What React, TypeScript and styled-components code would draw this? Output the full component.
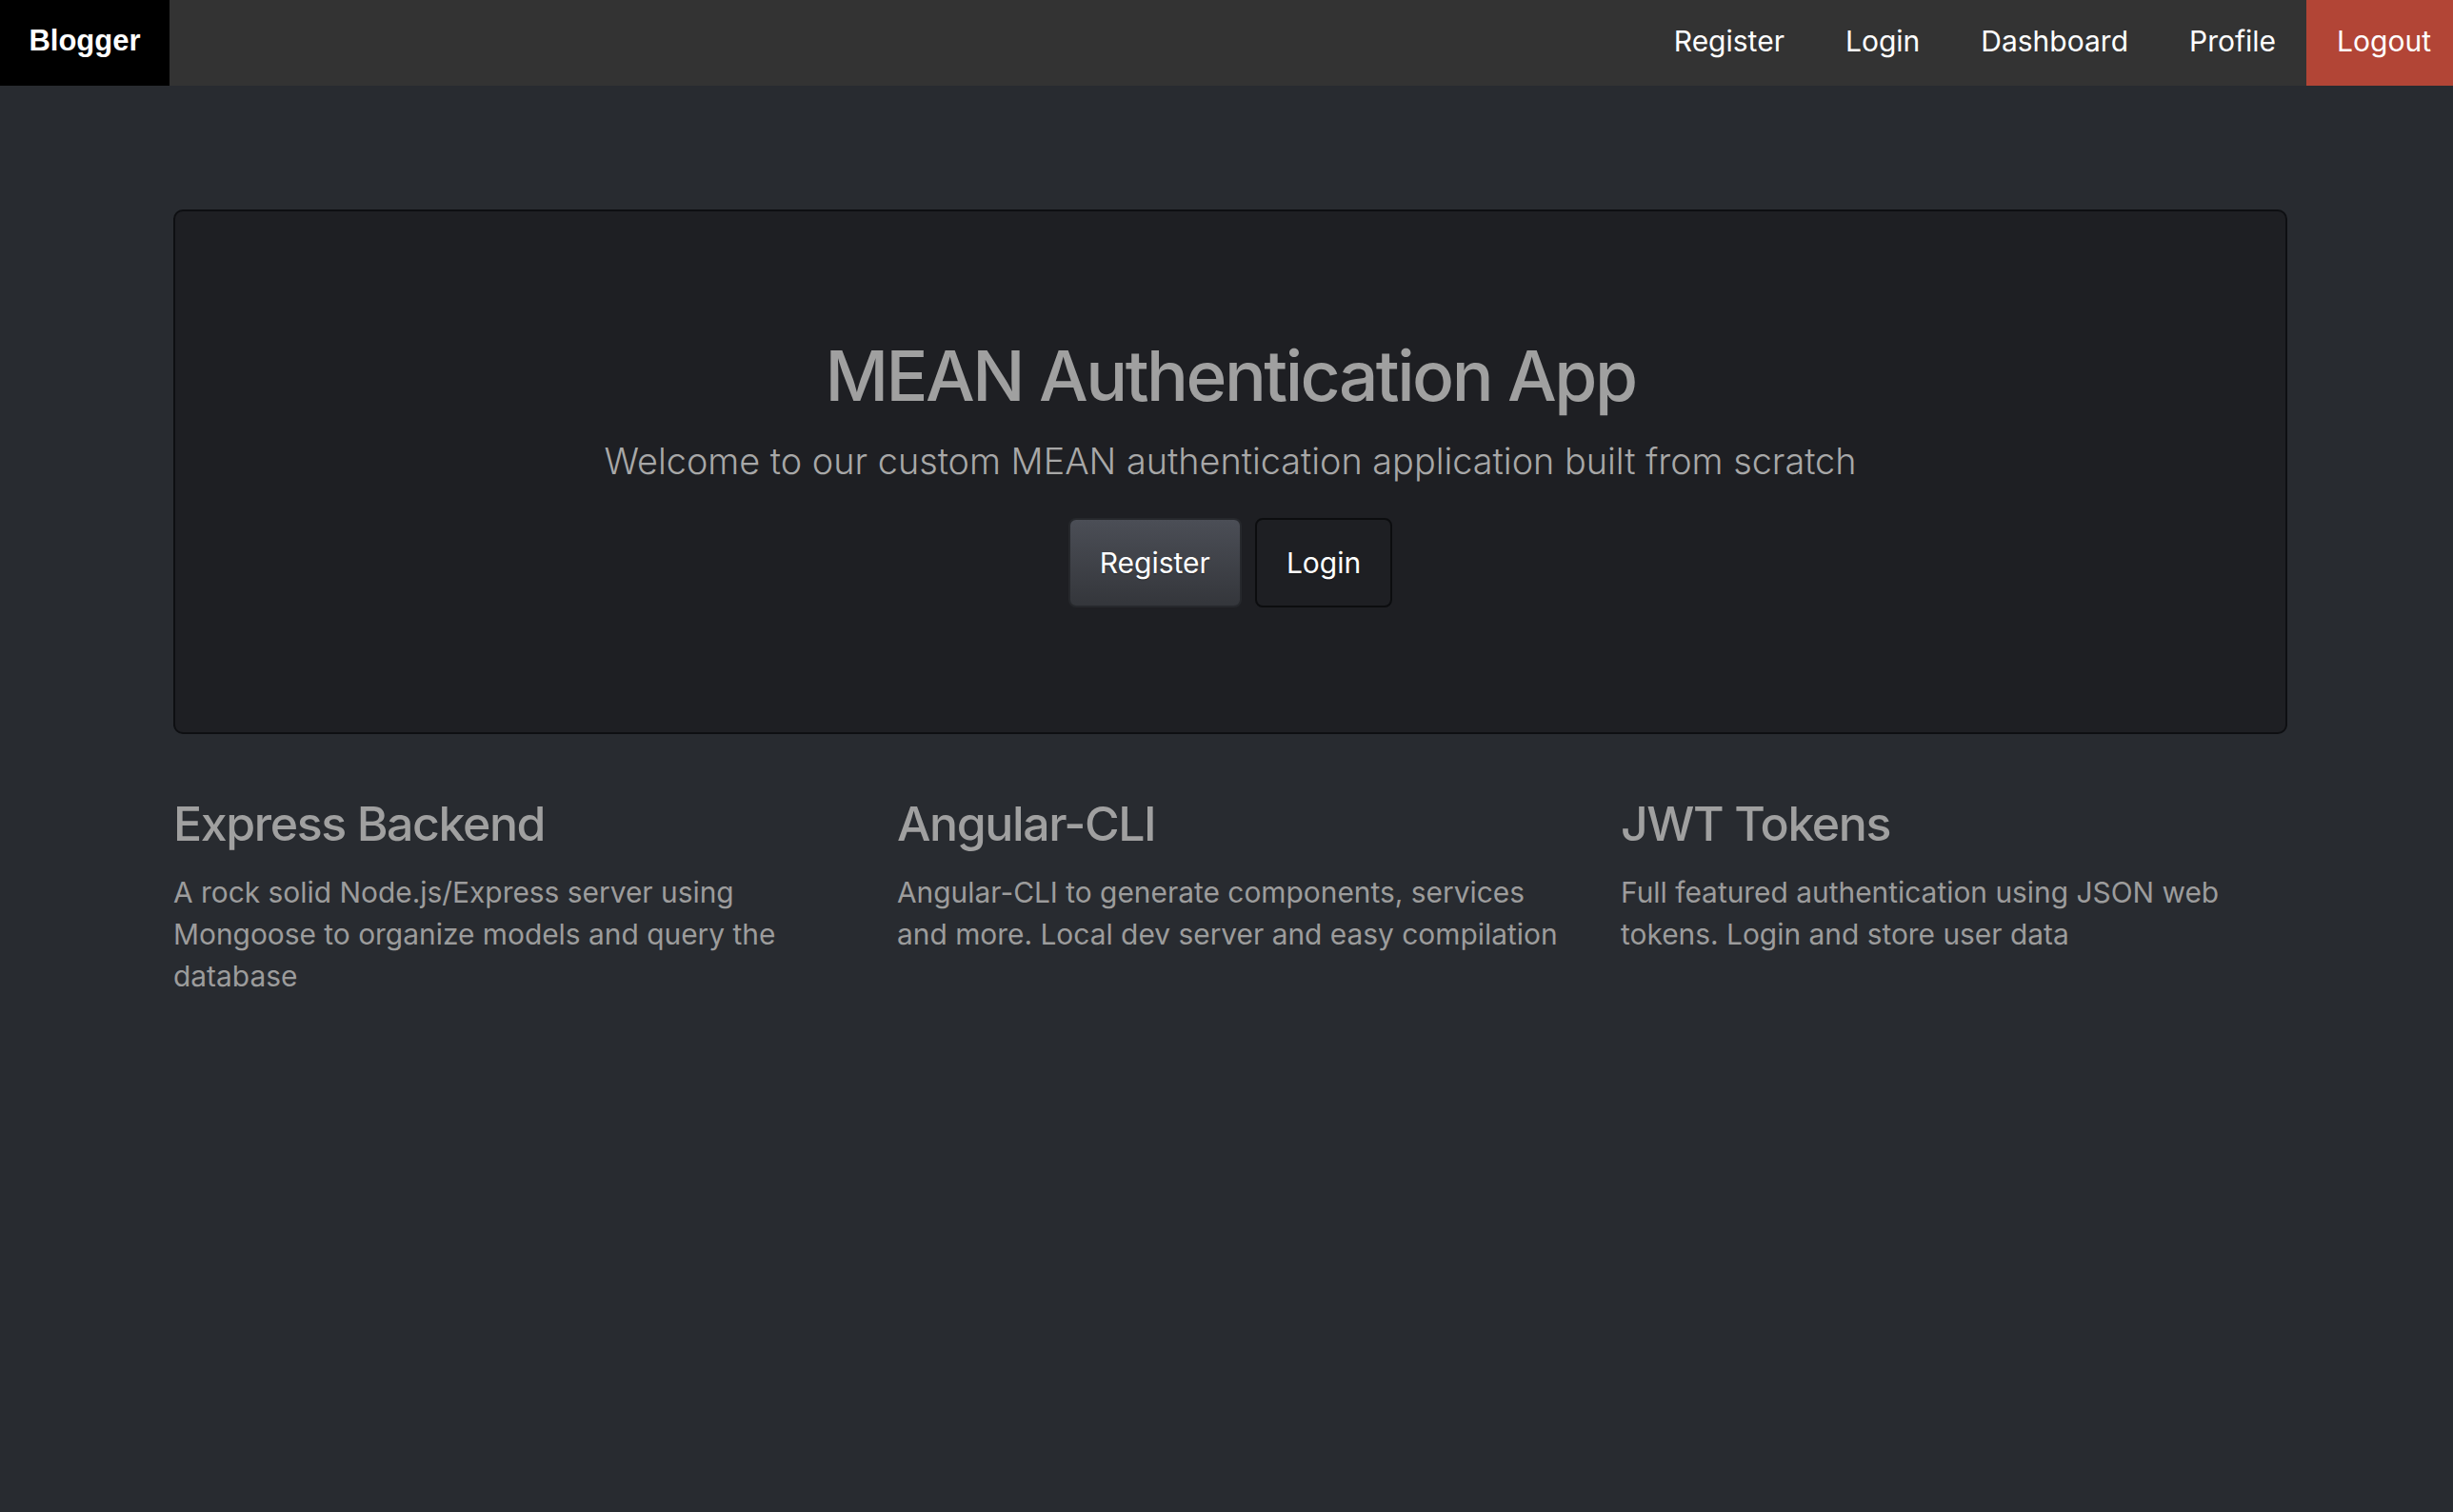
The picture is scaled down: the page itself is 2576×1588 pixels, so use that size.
import React from "react";
import styled, { createGlobalStyle } from "styled-components";

const GlobalStyle = createGlobalStyle`
  html, body {
    margin: 0;
    padding: 0;
    background: #282b30;
    font-family: Inter, "Open Sans", sans-serif;
  }
  * { box-sizing: border-box; }
`;

const Page = styled.div`
  min-height: 1588px;
  background: #282b30;
`;

const NavBar = styled.nav`
  display: flex;
  align-items: stretch;
  height: 90px;
  background: #333333;
`;

const Brand = styled.a`
  display: flex;
  align-items: center;
  justify-content: center;
  width: 178px;
  padding-bottom: 5px;
  background: #000;
  color: #fff;
  font-family: "Liberation Sans", Arial, sans-serif;
  font-weight: 700;
  font-size: 31px;
  text-decoration: none;
`;

const NavList = styled.ul`
  display: flex;
  align-items: stretch;
  margin: 0 0 0 auto;
  padding: 0;
  list-style: none;
`;

const NavItem = styled.li<{ $danger?: boolean }>`
  display: flex;
  align-items: center;
  padding: 0 ${(p) => (p.$danger ? "23px" : "32px")} 5px 32px;
  background: ${(p) => (p.$danger ? "#b24536" : "transparent")};
  color: #fff;
  font-size: 30px;
  font-weight: 400;
`;

const Container = styled.main`
  width: 2228px;
  margin: 0 auto;
  padding: 130px 0 0 8px;
`;

const Jumbotron = styled.section`
  display: flex;
  flex-direction: column;
  align-items: center;
  padding: 128px 64px 131px;
  background: #1e1f23;
  border: 2px solid #0e0f12;
  border-radius: 10px;
  margin-bottom: 64px;
`;

const Title = styled.h1`
  margin: 0;
  font-size: 73px;
  line-height: 90px;
  font-weight: 500;
  letter-spacing: -2.5px;
  color: #a0a0a0;
`;

const Lead = styled.p`
  margin: 20px 0 0;
  font-size: 37.8px;
  line-height: 48px;
  font-weight: 300;
  color: #a8a8a8;
`;

const ButtonRow = styled.div`
  display: flex;
  gap: 14px;
  margin-top: 36px;
`;

const Button = styled.button<{ $primary?: boolean }>`
  height: 94px;
  padding: 0 31px;
  border-radius: 8px;
  border: 2px solid ${(p) => (p.$primary ? "#26282c" : "#0c0d0f")};
  background: ${(p) =>
    p.$primary ? "linear-gradient(#4b4e56, #34363b)" : "#1e1f23"};
  color: #fff;
  font-family: Inter, "Open Sans", sans-serif;
  font-size: 30px;
  font-weight: 400;
  text-shadow: 0 1px 1px rgba(0, 0, 0, 0.4);
`;

const Features = styled.section`
  display: grid;
  grid-template-columns: repeat(3, 700px);
  column-gap: 60px;
`;

const Feature = styled.div``;

const FeatureTitle = styled.h3`
  margin: 0;
  font-size: 50px;
  line-height: 60px;
  font-weight: 500;
  letter-spacing: -1.4px;
  color: #a0a0a0;
`;

const FeatureText = styled.p`
  margin: 20px 0 0;
  font-size: 29.9px;
  line-height: 44px;
  font-weight: 400;
  color: #9c9c9c;
`;

const features = [
  {
    title: "Express Backend",
    text: "A rock solid Node.js/Express server using Mongoose to organize models and query the database",
  },
  {
    title: "Angular-CLI",
    text: "Angular-CLI to generate components, services and more. Local dev server and easy compilation",
  },
  {
    title: "JWT Tokens",
    text: "Full featured authentication using JSON web tokens. Login and store user data",
  },
];

export default function App() {
  return (
    <Page>
      <GlobalStyle />
      <NavBar>
        <Brand href="#">Blogger</Brand>
        <NavList>
          <NavItem>Register</NavItem>
          <NavItem>Login</NavItem>
          <NavItem>Dashboard</NavItem>
          <NavItem>Profile</NavItem>
          <NavItem $danger>Logout</NavItem>
        </NavList>
      </NavBar>
      <Container>
        <Jumbotron>
          <Title>MEAN Authentication App</Title>
          <Lead>Welcome to our custom MEAN authentication application built from scratch</Lead>
          <ButtonRow>
            <Button $primary>Register</Button>
            <Button>Login</Button>
          </ButtonRow>
        </Jumbotron>
        <Features>
          {features.map((f) => (
            <Feature key={f.title}>
              <FeatureTitle>{f.title}</FeatureTitle>
              <FeatureText>{f.text}</FeatureText>
            </Feature>
          ))}
        </Features>
      </Container>
    </Page>
  );
}
